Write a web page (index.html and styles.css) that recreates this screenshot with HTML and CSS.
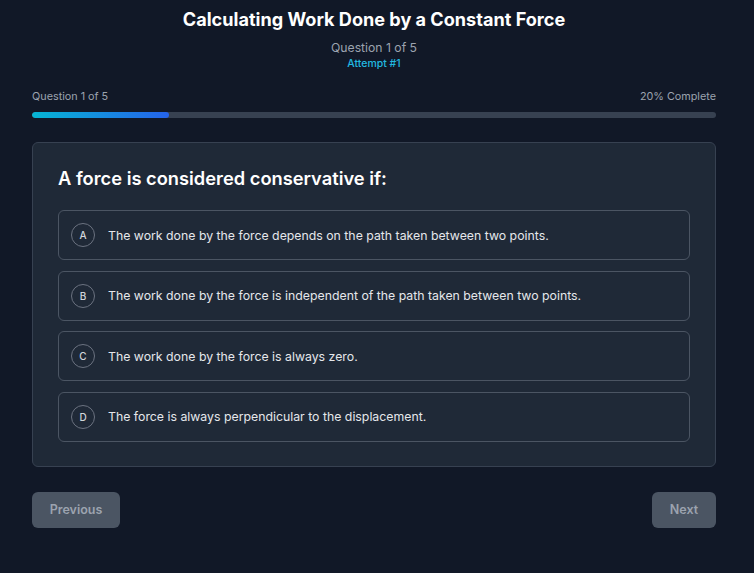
FILE: index.html
```html
<!DOCTYPE html>
<html>
<head>
<meta charset="utf-8">
<link rel="stylesheet" href="styles.css">
</head>
<body>
<div class="page">
  <header class="header">
    <h1 class="title">Calculating Work Done by a Constant Force</h1>
    <div class="subtitle">Question 1 of 5</div>
    <div class="attempt">Attempt #1</div>
  </header>
  <section class="progress">
    <div class="progress-labels">
      <span>Question 1 of 5</span>
      <span>20% Complete</span>
    </div>
    <div class="track"><div class="fill" style="width:20%"></div></div>
  </section>
  <section class="card">
    <h2 class="question">A force is considered conservative if:</h2>
    <div class="options">
      <div class="option"><span class="letter">A</span><span class="opt-text">The work done by the force depends on the path taken between two points.</span></div>
      <div class="option"><span class="letter">B</span><span class="opt-text">The work done by the force is independent of the path taken between two points.</span></div>
      <div class="option"><span class="letter">C</span><span class="opt-text">The work done by the force is always zero.</span></div>
      <div class="option"><span class="letter">D</span><span class="opt-text">The force is always perpendicular to the displacement.</span></div>
    </div>
  </section>
  <nav class="nav">
    <button class="btn prev">Previous</button>
    <button class="btn next">Next</button>
  </nav>
</div>
</body>
</html>
```
FILE: styles.css
```css
html, body {
  margin: 0;
  padding: 0;
  background: #111827;
  font-family: Inter, "Noto Sans", sans-serif;
  color: #f3f4f6;
}
.page {
  width: 684px;
  margin-left: 32px;
  padding-top: 7px;
}
.header {
  text-align: center;
}
.title {
  margin: 0;
  font-size: 18.1px;
  line-height: 24px;
  font-weight: 700;
  color: #ffffff;
}
.subtitle {
  margin-top: 9px;
  font-size: 12.2px;
  line-height: 16px;
  color: #9ca3af;
}
.attempt {
  font-size: 10.5px;
  line-height: 16px;
  color: #22b8e0;
  font-weight: 500;
}
.progress {
  margin-top: 17px;
}
.progress-labels {
  display: flex;
  justify-content: space-between;
  font-size: 10.8px;
  line-height: 16px;
  color: #9ca3af;
}
.track {
  margin-top: 7px;
  height: 6px;
  border-radius: 3px;
  background: #374151;
  overflow: hidden;
}
.fill {
  height: 100%;
  border-radius: 3px;
  background: linear-gradient(90deg, #06b6d4, #2563eb);
}
.card {
  margin-top: 24px;
  background: #1f2937;
  border: 1px solid #374151;
  border-radius: 6px;
  padding: 22px 25px 24px 25px;
}
.question {
  margin: 0;
  font-size: 18.3px;
  line-height: 26px;
  font-weight: 600;
  color: #ffffff;
}
.options {
  margin-top: 19px;
  display: flex;
  flex-direction: column;
  gap: 10.5px;
}
.option {
  display: flex;
  align-items: center;
  height: 48px;
  padding: 0 12px;
  border: 1px solid #4b5563;
  border-radius: 6px;
}
.letter {
  flex: none;
  width: 22px;
  height: 22px;
  border: 1.5px solid #6b7280;
  border-radius: 50%;
  display: flex;
  align-items: center;
  justify-content: center;
  font-size: 10px;
  font-weight: 500;
  color: #d1d5db;
}
.opt-text {
  margin-left: 13px;
  font-size: 12.3px;
  color: #e5e7eb;
}
.nav {
  margin-top: 25px;
  display: flex;
  justify-content: space-between;
}
.btn {
  height: 36px;
  border: none;
  border-radius: 6px;
  background: #4b5563;
  color: #9ca3af;
  font-family: Inter, "Noto Sans", sans-serif;
  font-size: 12.5px;
  font-weight: 600;
}
.prev { width: 88px; }
.next { width: 64px; }
```
